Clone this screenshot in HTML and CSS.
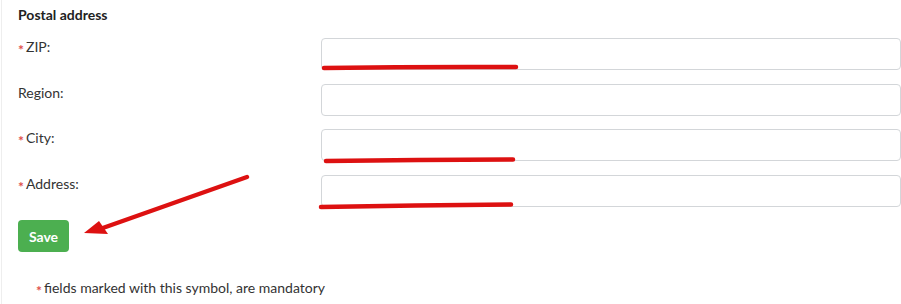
FILE: index.html
```html
<!DOCTYPE html>
<html lang="en">
<head>
    <meta charset="UTF-8">
    <title>Postal address</title>
    <link rel="stylesheet" href="styles.css">
</head>
<body>
    <div class="panel">
        <h3 class="section-title">Postal address</h3>

        <form class="address-form">
            <div class="form-row">
                <label for="zip"><span class="req">*</span>ZIP:</label>
                <input id="zip" type="text">
            </div>
            <div class="form-row">
                <label for="region">Region:</label>
                <input id="region" type="text">
            </div>
            <div class="form-row">
                <label for="city"><span class="req">*</span>City:</label>
                <input id="city" type="text">
            </div>
            <div class="form-row">
                <label for="address"><span class="req">*</span>Address:</label>
                <input id="address" type="text">
            </div>

            <button type="button" class="btn-save">Save</button>
        </form>

        <p class="note"><span class="req">*</span>fields marked with this symbol, are mandatory</p>
    </div>

    <!-- red hand-drawn marks over the form -->
    <svg class="annotations" width="901" height="304" viewBox="0 0 901 304">
        <g fill="none" stroke="#dd1111" stroke-width="4.5" stroke-linecap="round">
            <path d="M324 68 Q420 66.5 516 67"/>
            <path d="M326 161 Q420 159.5 513 159.5"/>
            <path d="M321 207 Q416 205 511 204.5"/>
            <path d="M247 177 L100 229"/>
        </g>
        <polygon points="84,233 99,221 108,234" fill="#dd1111"/>
    </svg>
</body>
</html>
```

FILE: styles.css
```css
:root {
    --text-main: #333333;
    --text-dark: #222222;
    --border: #d3d6d9;
    --required: #e0504a;
    --green: #4caf50;
}

* {
    box-sizing: border-box;
}

body {
    margin: 0;
    font-family: 'Lato', 'Open Sans', Arial, sans-serif;
    font-size: 14px;
    color: var(--text-main);
    background-color: #ffffff;
    position: relative;
}

.panel {
    margin-left: 1px;
    border-left: 1px solid #eeeeee;
    padding: 6px 0 0 16px;
    min-height: 304px;
}

.section-title {
    margin: 0 0 14px;
    font-size: 14px;
    line-height: 18px;
    font-weight: bold;
    color: var(--text-dark);
}

.form-row {
    display: flex;
    align-items: flex-start;
    margin-bottom: 13.5px;
}

.form-row label {
    width: 303px;
    line-height: 18px;
}

.form-row input {
    width: 580px;
    height: 32px;
    border: 1px solid var(--border);
    border-radius: 4px;
    padding: 4px 8px;
    font: inherit;
}

.req {
    color: var(--required);
    font-size: 14px;
    font-weight: bold;
    margin-right: 2px;
    vertical-align: -3px;
}

.btn-save {
    display: block;
    width: 51px;
    height: 32px;
    border: none;
    border-radius: 4px;
    background-color: var(--green);
    color: #ffffff;
    font-family: inherit;
    font-size: 14px;
    font-weight: bold;
    padding: 0;
}

.note {
    margin: 27px 0 0 18px;
    line-height: 18px;
}

.annotations {
    position: absolute;
    top: 0;
    left: 0;
    pointer-events: none;
}
```
